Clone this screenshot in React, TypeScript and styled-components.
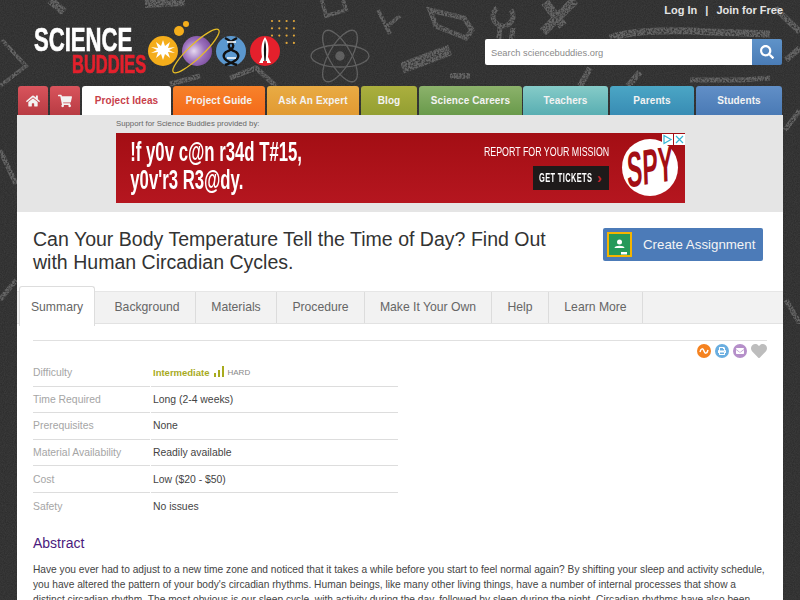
import React from "react";
import styled, { createGlobalStyle } from "styled-components";
import { FaHome, FaShoppingCart, FaSearch, FaHeart, FaPrint, FaEnvelope } from "react-icons/fa";

const GlobalStyle = createGlobalStyle`
  html, body {
    margin: 0;
    padding: 0;
    height: 600px;
    overflow: hidden;
    background: #292929;
    font-family: "Liberation Sans", Arial, sans-serif;
  }
`;

const Page = styled.div`
  position: relative;
  width: 800px;
  height: 600px;
  overflow: hidden;
`;

const Backdrop = styled.svg`
  position: absolute;
  left: 0;
  top: 0;
  width: 800px;
  height: 600px;
`;

const Container = styled.div`
  position: relative;
  width: 766px;
  margin: 0 auto;
`;

const Header = styled.header`
  height: 86px;
  display: flex;
  justify-content: space-between;
`;

const Logo = styled.div`
  display: flex;
  padding: 21px 0 0 17px;
`;

const Wordmark = styled.div`
  width: 116px;
  font-weight: 700;
  display: flex;
  flex-direction: column;
  padding-top: 5px;
  -webkit-text-stroke: 0.7px currentColor;
`;

const WordTop = styled.span`
  font-size: 33px;
  line-height: 28px;
  color: #fff;
  transform: scaleX(0.67);
  transform-origin: left center;
  white-space: nowrap;
`;

const WordBottom = styled.span`
  font-size: 25px;
  line-height: 19px;
  margin: 1px 0 0 38px;
  color: #e3202c;
  transform: scaleX(0.66);
  transform-origin: left center;
  white-space: nowrap;
`;

const LogoArt = styled.svg`
  width: 170px;
  height: 65px;
  margin: -6px 0 0 -11px;
`;

const HeaderRight = styled.div`
  display: flex;
  flex-direction: column;
  align-items: flex-end;
`;

const UserLinks = styled.div`
  display: flex;
  gap: 8px;
  padding-top: 3px;
  font-size: 11px;
  line-height: 14px;
  font-weight: 700;
  color: #e4e4e4;
`;

const Search = styled.div`
  display: flex;
  width: 297px;
  height: 26px;
  margin: 22px 1px 0 0;
  border-radius: 2px;
  overflow: hidden;
`;

const SearchField = styled.div`
  flex: 1;
  background: #fff;
  color: #8a8a8a;
  font-size: 9.3px;
  line-height: 28px;
  padding-left: 6px;
`;

const SearchButton = styled.div`
  width: 30px;
  background: linear-gradient(#5f93c9, #4a7cb6);
  color: #fff;
  display: flex;
  align-items: center;
  justify-content: center;
  font-size: 14px;
`;

const Nav = styled.nav`
  display: flex;
  height: 29px;
`;

const NavTab = styled.div<{ $w: number; $gap?: number; $from: string; $to: string; $active?: boolean }>`
  width: ${(p) => p.$w}px;
  margin-left: ${(p) => p.$gap ?? 2}px;
  background: ${(p) => (p.$active ? "#fff" : `linear-gradient(${p.$from}, ${p.$to})`)};
  color: ${(p) => (p.$active ? "#c8404a" : "#f3f3f3")};
  border-radius: 3px 3px 0 0;
  display: flex;
  align-items: center;
  justify-content: center;
  font-size: 10px;
  font-weight: 700;
  letter-spacing: 0.1px;
  white-space: nowrap;
`;

const NavIcon = styled.span`
  font-size: 14px;
  display: flex;
`;

const AdBand = styled.div`
  background: #e5e5e5;
  height: 97px;
  padding-left: 99px;
  box-sizing: border-box;
`;

const Sponsor = styled.div`
  font-size: 7.8px;
  line-height: 18px;
  color: #666;
`;

const Ad = styled.div`
  position: relative;
  width: 569px;
  height: 70px;
  background: linear-gradient(#a30e14, #b5161f);
  display: flex;
  justify-content: space-between;
  color: #fff;
`;

const AdHeadline = styled.div`
  padding: 5px 0 0 23px;
  font-size: 27px;
  line-height: 28px;
  font-weight: 700;
  transform: scaleX(0.62);
  transform-origin: left center;
  white-space: nowrap;
`;

const AdCall = styled.div`
  display: flex;
  align-items: flex-start;
`;

const AdOffer = styled.div`
  display: flex;
  flex-direction: column;
  align-items: flex-end;
  padding-top: 12px;
  margin-right: 13px;
`;

const AdMission = styled.div`
  font-size: 13px;
  line-height: 14px;
  transform: scaleX(0.68);
  transform-origin: right center;
  white-space: nowrap;
`;

const AdTickets = styled.div`
  margin-top: 7px;
  width: 76px;
  height: 24px;
  background: #1e1a1a;
  display: flex;
  align-items: center;
  padding-left: 6px;
  box-sizing: border-box;
  gap: 4px;
`;

const AdTicketsLabel = styled.span`
  display: block;
  width: 54px;
  font-size: 12px;
  font-weight: 700;
  white-space: nowrap;
  letter-spacing: 0.6px;
  transform: scaleX(0.62);
  transform-origin: left center;
`;

const AdChevron = styled.span`
  color: #c5222c;
  font-size: 14px;
  font-weight: 700;
  line-height: 14px;
`;

const AdLogo = styled.div`
  width: 56px;
  height: 57px;
  margin: 6px 7px 0 0;
  background: #fff;
  border-radius: 50%;
  display: flex;
  justify-content: center;
`;

const AdLogoText = styled.span`
  color: #a30e14;
  font-size: 50px;
  font-weight: 700;
  line-height: 57px;
  white-space: nowrap;
  transform: scaleX(0.46) rotate(-4deg);
`;

const AdBadge = styled.div`
  position: absolute;
  right: 0;
  top: 1px;
  display: flex;
  gap: 1px;
`;

const AdBadgeCell = styled.span`
  width: 11px;
  height: 11px;
  background: #fff;
  display: flex;
`;

const Sheet = styled.main`
  background: #fff;
  height: 388px;
  overflow: hidden;
`;

const TitleRow = styled.div`
  display: flex;
  justify-content: space-between;
  height: 73px;
  padding: 16px 20px 0 16px;
  box-sizing: border-box;
`;

const Title = styled.h1`
  margin: 0;
  width: 530px;
  font-size: 19.55px;
  line-height: 23px;
  font-weight: 400;
  color: #333;
`;

const AssignButton = styled.div`
  width: 160px;
  height: 33px;
  background: #4c7bb8;
  border-radius: 2px;
  color: #f4f4f4;
  display: flex;
  align-items: center;
  font-size: 13.3px;
  gap: 11px;
  padding-left: 4px;
  box-sizing: border-box;
`;

const ClassroomIcon = styled.svg`
  width: 25px;
  height: 25px;
`;

const TabStrip = styled.div`
  display: flex;
  align-items: flex-end;
  height: 39px;
  position: relative;
`;

const TabRow = styled.div`
  display: flex;
  width: 100%;
  height: 33px;
  background: #f2f2f2;
  border-top: 1px solid #e6e6e6;
  border-bottom: 1px solid #e2e2e2;
  box-sizing: border-box;
`;

const Tab = styled.div<{ $w: number; $gap?: number; $active?: boolean }>`
  width: ${(p) => p.$w}px;
  margin-left: ${(p) => p.$gap ?? 0}px;
  box-sizing: border-box;
  display: flex;
  align-items: center;
  justify-content: center;
  font-size: 12.2px;
  color: #666;
  white-space: nowrap;
  border-right: 1px solid #dcdcdc;
  padding-bottom: 2px;
  ${(p) =>
    p.$active
      ? `
    height: 40px;
    margin-top: -6px;
    background: #fff;
    border: 1px solid #ddd;
    border-bottom: none;
    border-radius: 3px 3px 0 0;
    margin-right: 4px;
    padding: 1px 0 0;
  `
      : ""}
`;

const Body = styled.div`
  padding: 0 16px;
`;

const ToolRow = styled.div`
  margin-top: 16px;
  border-top: 1px solid #e0e0e0;
  height: 12px;
  display: flex;
  justify-content: flex-end;
  align-items: flex-start;
  gap: 4px;
  padding-top: 3px;
`;

const ToolDot = styled.span<{ $bg: string }>`
  width: 14px;
  height: 14px;
  border-radius: 50%;
  background: ${(p) => p.$bg};
  color: #fff;
  font-size: 8px;
  display: flex;
  align-items: center;
  justify-content: center;
`;

const HeartIcon = styled.span`
  color: #bdbdbd;
  font-size: 16px;
  display: flex;
  margin-top: -1px;
`;

const Facts = styled.div`
  width: 365px;
  display: grid;
  grid-template-columns: 117px 1fr;
  column-gap: 1px;
  margin-top: 4px;
`;

const FactLabel = styled.div<{ $last?: boolean }>`
  height: 26.6px;
  box-sizing: border-box;
  font-size: 10.4px;
  color: #a5a5a5;
  border-bottom: ${(p) => (p.$last ? "none" : "1px solid #ddd")};
  display: flex;
  align-items: center;
`;

const FactValue = styled(FactLabel)`
  color: #444;
  padding-left: 2px;
`;

const Level = styled.span`
  color: #a8ab1e;
  font-size: 9.5px;
  font-weight: 700;
`;

const Hard = styled.span`
  color: #888;
  font-size: 8px;
  margin-left: 4px;
`;

const Bars = styled.svg`
  width: 10px;
  height: 11px;
  margin: 0 0 2px 4px;
`;

const Heading = styled.h2`
  margin: 13px 0 0;
  font-size: 14px;
  line-height: 20px;
  font-weight: 400;
  color: #4b1a7d;
`;

const Paragraph = styled.p`
  margin: 9px 0 0;
  font-size: 10.2px;
  line-height: 15px;
  color: #444;
`;

const navItems = [
  { label: "Project Ideas", w: 89, gap: 2, from: "#fff", to: "#fff", active: true },
  { label: "Project Guide", w: 92, gap: 2, from: "#f7822a", to: "#f46a1a" },
  { label: "Ask An Expert", w: 92, gap: 2, from: "#e9ab44", to: "#e19a32" },
  { label: "Blog", w: 56, gap: 2, from: "#abaf3e", to: "#939f32" },
  { label: "Science Careers", w: 103, gap: 2, from: "#8cb26b", to: "#699a4b" },
  { label: "Teachers", w: 85, gap: 1, from: "#85cbc8", to: "#59aeb2" },
  { label: "Parents", w: 84, gap: 2, from: "#4ba6c5", to: "#388cb4" },
  { label: "Students", w: 86, gap: 2, from: "#618fc7", to: "#4a7ab5" },
];

const tabs = [
  { label: "Background", w: 97 },
  { label: "Materials", w: 81 },
  { label: "Procedure", w: 88 },
  { label: "Make It Your Own", w: 127 },
  { label: "Help", w: 57 },
  { label: "Learn More", w: 94 },
];

const facts = [
  { label: "Time Required", value: "Long (2-4 weeks)" },
  { label: "Prerequisites", value: "None" },
  { label: "Material Availability", value: "Readily available" },
  { label: "Cost", value: "Low ($20 - $50)" },
  { label: "Safety", value: "No issues" },
];

// chalk doodles behind the header, worn down by a noise mask
function BackdropArt() {
  return (
    <Backdrop viewBox="0 0 800 600">
      <filter id="grain" x="0" y="0" width="100%" height="100%">
        <feTurbulence type="fractalNoise" baseFrequency="0.9" numOctaves="2" />
        <feColorMatrix values="0 0 0 0 1  0 0 0 0 1  0 0 0 0 1  0 0 0 0.1 0" />
      </filter>
      <filter id="chalk" x="0" y="0" width="100%" height="100%">
        <feTurbulence type="fractalNoise" baseFrequency="0.55" numOctaves="2" result="noise" />
        <feColorMatrix in="noise" values="0 0 0 0 0  0 0 0 0 0  0 0 0 0 0  0 0 0 3 -0.8" result="mask" />
        <feComposite in="SourceGraphic" in2="mask" operator="in" />
        <feGaussianBlur stdDeviation="0.5" />
      </filter>
      <rect width="800" height="600" fill="#292929" />
      <g fill="none" stroke="#585858" strokeWidth="1.3">
        <ellipse cx="340" cy="56" rx="29" ry="11" />
        <ellipse cx="340" cy="56" rx="29" ry="11" transform="rotate(60 340 56)" />
        <ellipse cx="340" cy="56" rx="29" ry="11" transform="rotate(120 340 56)" />
        <circle cx="340" cy="56" r="4" fill="#585858" />
      </g>
      <g filter="url(#chalk)" fill="none" stroke="#5c5c5c" strokeWidth="2">
        <path d="M2 40l24 26l-26 20" strokeWidth="4" />
        <path d="M50 0l14 12M145 4l40 -2" strokeWidth="8" />
        <path d="M322 0l4 16l20 -6l-3 -10" strokeWidth="4" />
        <path d="M378 10l12 24M385 28l15 -12" strokeWidth="4" />
        <path d="M430 10l34 8l8 12l-6 8l-30 -12z" strokeWidth="5" />
        <path d="M497 8a10 10 0 1 0 14 2M500 26l-2 24h12l3 -22" strokeWidth="5" />
        <path d="M545 2l18 24M575 0l-32 32" strokeWidth="9" />
        <path d="M610 38q30 -10 100 -6l60 2" strokeWidth="7" />
        <path d="M402 68l48 -18" strokeWidth="11" />
        <path d="M690 80h50l30 -2" strokeWidth="5" />
        <path d="M775 8l25 24M786 60l14 -12" strokeWidth="6" />
        <path d="M230 78l26 -10l20 18M170 84l30 -8" strokeWidth="5" />
        <path d="M590 68l-10 18M640 72l-12 14M450 76h20" strokeWidth="6" />
        <path d="M0 150l16 34M0 300l16 -20M785 130l15 -20M786 300l14 24" strokeWidth="5" />
      </g>
      <rect width="800" height="600" filter="url(#grain)" />
    </Backdrop>
  );
}

function LogoIcons() {
  const dots = [];
  for (let row = 0; row < 4; row++) {
    for (let col = 0; col < 4; col++) {
      if (row === 3 && col !== 2 && col !== 3) continue;
      dots.push(<circle key={`${row}-${col}`} cx={133 + col * 7.3} cy={6 + row * 7.3} r="1.1" fill="#e0a63a" />);
    }
  }
  return (
    <LogoArt viewBox="0 0 170 65">
      <defs>
        <radialGradient id="planet" cx="0.4" cy="0.5" r="0.6">
          <stop offset="0" stopColor="#e6d9f0" />
          <stop offset="0.6" stopColor="#9a6fbb" />
          <stop offset="1" stopColor="#7d4f9f" />
        </radialGradient>
      </defs>
      <circle cx="24" cy="36" r="15" fill="#f4ad1b" />
      <path
        d="M24 25l2 6 5-4-2 6 7-1-6 3 6 3-7-1 2 6-5-4-2 6-2-6-5 4 2-6-7 1 6-3-6-3 7 1-2-6 5 4z"
        fill="#fff"
      />
      <circle cx="40" cy="16" r="5" fill="#f4ad1b" />
      <circle cx="47" cy="9" r="3" fill="#f4ad1b" />
      <circle cx="58" cy="36" r="15" fill="url(#planet)" />
      <ellipse cx="57" cy="36" rx="31" ry="7" fill="none" stroke="#e6bd25" strokeWidth="1.3" transform="rotate(-43 57 36)" />
      <circle cx="92" cy="36" r="15" fill="#5b98cf" />
      <path d="M86 23q16 8 1 14q-8 7 11 13M98 23q-16 8 -1 14q8 7 -11 13" fill="none" stroke="#111" strokeWidth="2.4" />
      <path d="M88 27h9M88 43h9" stroke="#fff" strokeWidth="1.6" />
      <circle cx="126" cy="36" r="15" fill="#e4202c" />
      <path d="M126 22c4 6 4 12 3 20l3 6h-4v-2h-4v2h-4l3-6c-1-8-1-14 3-20z" fill="#fff" />
      <path d="M126 25c1.400 5 1.400 12 .6 21h-1.200c-.8-9-.8-16 .6-21z" fill="#111" />
      {dots}
    </LogoArt>
  );
}

export default function App() {
  return (
    <Page>
      <GlobalStyle />
      <BackdropArt />
      <Container>
        <Header>
          <Logo>
            <Wordmark>
              <WordTop>SCIENCE</WordTop>
              <WordBottom>BUDDIES</WordBottom>
            </Wordmark>
            <LogoIcons />
          </Logo>
          <HeaderRight>
            <UserLinks>
              <span>Log In</span>
              <span>|</span>
              <span>Join for Free</span>
            </UserLinks>
            <Search>
              <SearchField>Search sciencebuddies.org</SearchField>
              <SearchButton>
                <FaSearch />
              </SearchButton>
            </Search>
          </HeaderRight>
        </Header>

        <Nav>
          <NavTab $w={30} $gap={1} $from="#d9545c" $to="#b83b43">
            <NavIcon>
              <FaHome />
            </NavIcon>
          </NavTab>
          <NavTab $w={30} $from="#d9545c" $to="#b83b43">
            <NavIcon>
              <FaShoppingCart />
            </NavIcon>
          </NavTab>
          {navItems.map((item) => (
            <NavTab key={item.label} $w={item.w} $gap={item.gap} $from={item.from} $to={item.to} $active={item.active}>
              {item.label}
            </NavTab>
          ))}
        </Nav>

        <AdBand>
          <Sponsor>Support for Science Buddies provided by:</Sponsor>
          <Ad>
            <AdHeadline>
              !f y0v c@n r34d T#15,
              <br />
              y0v'r3 R3@dy.
            </AdHeadline>
            <AdCall>
              <AdOffer>
                <AdMission>REPORT FOR YOUR MISSION</AdMission>
                <AdTickets>
                  <AdTicketsLabel>GET TICKETS</AdTicketsLabel>
                  <AdChevron>›</AdChevron>
                </AdTickets>
              </AdOffer>
              <AdLogo>
                <AdLogoText>SPY</AdLogoText>
              </AdLogo>
            </AdCall>
            <AdBadge>
              <AdBadgeCell>
                <svg viewBox="0 0 11 11" width="11" height="11">
                  <path d="M2 1.500l7 4-7 4z" fill="none" stroke="#35b5d5" strokeWidth="1.200" />
                </svg>
              </AdBadgeCell>
              <AdBadgeCell>
                <svg viewBox="0 0 11 11" width="11" height="11">
                  <path d="M2 2l7 7M9 2l-7 7" stroke="#35b5d5" strokeWidth="1.200" />
                </svg>
              </AdBadgeCell>
            </AdBadge>
          </Ad>
        </AdBand>

        <Sheet>
          <TitleRow>
            <Title>Can Your Body Temperature Tell the Time of Day? Find Out with Human Circadian Cycles.</Title>
            <AssignButton>
              <ClassroomIcon viewBox="0 0 25 25">
                <rect x="1" y="1" width="23" height="23" fill="#25995a" stroke="#f4b400" strokeWidth="2" />
                <circle cx="12.500" cy="10" r="2.500" fill="#fff" />
                <path d="M7.500 16c0-3 10-3 10 0z" fill="#fff" />
                <rect x="14" y="20" width="6" height="2.500" fill="#fff" />
              </ClassroomIcon>
              Create Assignment
            </AssignButton>
          </TitleRow>

          <TabStrip>
            <TabRow>
              <Tab $w={76} $gap={2} $active>
                Summary
              </Tab>
              {tabs.map((tab) => (
                <Tab key={tab.label} $w={tab.w}>
                  {tab.label}
                </Tab>
              ))}
            </TabRow>
          </TabStrip>

          <Body>
            <ToolRow>
              <ToolDot $bg="#f5821f">
                <svg viewBox="0 0 10 10" width="10" height="10">
                  <path d="M1 6c1-4 3-4 4-1s3 3 4-1" fill="none" stroke="#fff" strokeWidth="1.500" />
                </svg>
              </ToolDot>
              <ToolDot $bg="#6aaee0">
                <FaPrint />
              </ToolDot>
              <ToolDot $bg="#b58fc9">
                <FaEnvelope />
              </ToolDot>
              <HeartIcon>
                <FaHeart />
              </HeartIcon>
            </ToolRow>

            <Facts>
              <FactLabel>Difficulty</FactLabel>
              <FactValue>
                <Level>Intermediate</Level>
                <Bars viewBox="0 0 10 11">
                  <path d="M0 7h2v4H0zM4 4h2v7H4zM8 0h2v11H8z" fill="#a8ab1e" />
                </Bars>
                <Hard>HARD</Hard>
              </FactValue>
              {facts.map((fact, i) => (
                <React.Fragment key={fact.label}>
                  <FactLabel $last={i === facts.length - 1}>{fact.label}</FactLabel>
                  <FactValue $last={i === facts.length - 1}>{fact.value}</FactValue>
                </React.Fragment>
              ))}
            </Facts>

            <Heading>Abstract</Heading>
            <Paragraph>
              Have you ever had to adjust to a new time zone and noticed that it takes a while before you start to feel
              normal again? By shifting your sleep and activity schedule, you have altered the pattern of your body's
              circadian rhythms. Human beings, like many other living things, have a number of internal processes that
              show a distinct circadian rhythm. The most obvious is our sleep cycle, with activity during the day,
              followed by sleep during the night. Circadian rhythms have also been
            </Paragraph>
          </Body>
        </Sheet>
      </Container>
    </Page>
  );
}
